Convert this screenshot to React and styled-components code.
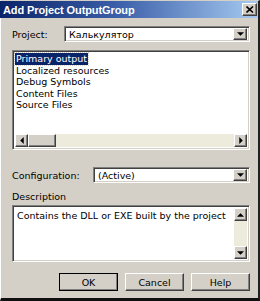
import React from 'react';
import styled, { createGlobalStyle, css } from 'styled-components';

const Global = createGlobalStyle`
    html, body {
        margin: 0;
        padding: 0;
        background: #d4d0c8;
    }
    * { box-sizing: border-box; }
`;

const face = '#d4d0c8';

const raised = css`
    background: ${face};
    border-top: 1px solid #ffffff;
    border-left: 1px solid #ffffff;
    border-right: 1px solid #404040;
    border-bottom: 1px solid #404040;
    box-shadow: inset -1px -1px #808080;
`;

const sunken = css`
    border-top: 1px solid #808080;
    border-left: 1px solid #808080;
    border-right: 1px solid #ffffff;
    border-bottom: 1px solid #ffffff;
    box-shadow: inset 1px 1px #404040, inset -1px -1px ${face};
`;

const Window = styled.div`
    width: 260px;
    height: 301px;
    background: ${face};
    border-top: 1px solid ${face};
    border-left: 1px solid #ffffff;
    border-right: 2px solid #202020;
    border-bottom: 3px solid #101010;
    font-family: "DejaVu Sans", "Liberation Sans", sans-serif;
    font-size: 9.5px;
    color: #000;
    display: flex;
    flex-direction: column;
`;

const TitleBar = styled.div`
    height: 17px;
    flex-shrink: 0;
    margin: 0 0 0 -1px;
    background: linear-gradient(90deg, #0a246a 0%, #3a5ea8 45%, #a6caf0 100%);
    display: flex;
    align-items: center;
    justify-content: space-between;
    padding: 0 1px 0 3px;
`;

const Title = styled.span`
    color: #fff;
    font-family: "Liberation Sans", sans-serif;
    font-weight: bold;
    font-size: 11px;
    letter-spacing: -0.1px;
`;

const CloseButton = styled.div`
    ${raised};
    width: 15px;
    height: 13px;
    display: flex;
    align-items: center;
    justify-content: center;
`;

const Body = styled.div`
    flex: 1;
    display: flex;
    flex-direction: column;
    padding: 8px 8px 0 11px;
    & > * { flex-shrink: 0; }
`;

const Row = styled.div`
    display: flex;
    align-items: center;
    height: ${p => p.$h || 16}px;
    margin-top: ${p => p.$top}px;
`;

const Label = styled.span`
    width: ${p => p.$w}px;
    flex-shrink: 0;
    line-height: 11px;
`;

const Combo = styled.div`
    ${sunken};
    flex: 1;
    height: 16px;
    background: #fff;
    display: flex;
    align-items: center;
    justify-content: space-between;
    padding: 2px 2px 2px 4px;
`;

const DropButton = styled.div`
    ${raised};
    width: 14px;
    height: 12px;
    display: flex;
    align-items: center;
    justify-content: center;
`;

const Field = styled.div`
    ${sunken};
    background: #fff;
    height: ${p => p.$h}px;
    margin-top: ${p => p.$top}px;
    display: flex;
    flex-direction: ${p => (p.$row ? 'row' : 'column')};
    padding: 2px;
`;

const Items = styled.div`
    flex: 1;
    display: flex;
    flex-direction: column;
    align-items: flex-start;
`;

const Item = styled.div`
    height: 11.5px;
    line-height: 11.5px;
    padding: 0 1px;
    background: ${p => (p.$selected ? '#0a246a' : 'transparent')};
    color: ${p => (p.$selected ? '#fff' : '#000')};
    outline: ${p => (p.$selected ? '1px dotted #d4d0c8' : 'none')};
`;

const HScroll = styled.div`
    height: 13px;
    display: flex;
    background: #ecebdc;
`;

const VScroll = styled.div`
    width: 13px;
    display: flex;
    flex-direction: column;
    justify-content: space-between;
    background: #ecebdc;
`;

const ScrollBtn = styled.div`
    ${raised};
    width: 13px;
    height: 13px;
    display: flex;
    align-items: center;
    justify-content: center;
`;

const Thumb = styled.div`
    ${raised};
    width: 28px;
    height: 13px;
`;

const Spacer = styled.div`
    flex: 1;
`;

const DescText = styled.div`
    flex: 1;
    padding: 2px 2px;
    line-height: 11px;
`;

const Buttons = styled.div`
    display: flex;
    justify-content: flex-end;
    gap: 7px;
    margin-top: 11px;
`;

const Button = styled.div`
    ${raised};
    width: 59px;
    height: 18px;
    display: flex;
    align-items: center;
    justify-content: center;
    ${p => p.$default && css`
        outline: 1px solid #000;
        outline-offset: -1px;
        border-right-color: #000;
        border-bottom-color: #000;
    `}
`;

const Arrow = ({ dir }) => {
    const pts = {
        down: '0,0 6,0 3,3',
        up: '0,3 6,3 3,0',
        left: '3,0 3,6 0,3',
        right: '0,0 0,6 3,3',
    }[dir];
    const vert = dir === 'down' || dir === 'up';
    return (
        <svg width={vert ? 7 : 4} height={vert ? 4 : 7} viewBox={vert ? '0 0 6 3' : '0 0 3 6'}>
            <polygon points={pts} fill="#000" />
        </svg>
    );
};

const items = ['Primary output', 'Localized resources', 'Debug Symbols', 'Content Files', 'Source Files'];

export default function App() {
    return (
        <>
            <Global />
            <Window>
                <TitleBar>
                    <Title>Add Project OutputGroup</Title>
                    <CloseButton>
                        <svg width="8" height="7" viewBox="0 0 8 7">
                            <path d="M0.5 0.5 L7 6.5 M7 0.5 L0.5 6.5" stroke="#000" strokeWidth="1.6" />
                        </svg>
                    </CloseButton>
                </TitleBar>
                <Body>
                    <Row $top={0}>
                        <Label $w={52}>Project:</Label>
                        <Combo>
                            <span>Калькулятор</span>
                            <DropButton><Arrow dir="down" /></DropButton>
                        </Combo>
                    </Row>
                    <Field $h={100} $top={8}>
                        <Items>
                            {items.map((t, i) => (
                                <Item key={t} $selected={i === 0}>{t}</Item>
                            ))}
                        </Items>
                        <HScroll>
                            <ScrollBtn><Arrow dir="left" /></ScrollBtn>
                            <Thumb />
                            <Spacer />
                            <ScrollBtn><Arrow dir="right" /></ScrollBtn>
                        </HScroll>
                    </Field>
                    <Row $top={17}>
                        <Label $w={81}>Configuration:</Label>
                        <Combo>
                            <span>(Active)</span>
                            <DropButton><Arrow dir="down" /></DropButton>
                        </Combo>
                    </Row>
                    <Row $top={8} $h={11}>
                        <Label $w={100}>Description</Label>
                    </Row>
                    <Field $h={57} $top={3} $row>
                        <DescText>Contains the DLL or EXE built by the project</DescText>
                        <VScroll>
                            <ScrollBtn><Arrow dir="up" /></ScrollBtn>
                            <ScrollBtn><Arrow dir="down" /></ScrollBtn>
                        </VScroll>
                    </Field>
                    <Buttons>
                        <Button $default>OK</Button>
                        <Button>Cancel</Button>
                        <Button>Help</Button>
                    </Buttons>
                </Body>
            </Window>
        </>
    );
}
